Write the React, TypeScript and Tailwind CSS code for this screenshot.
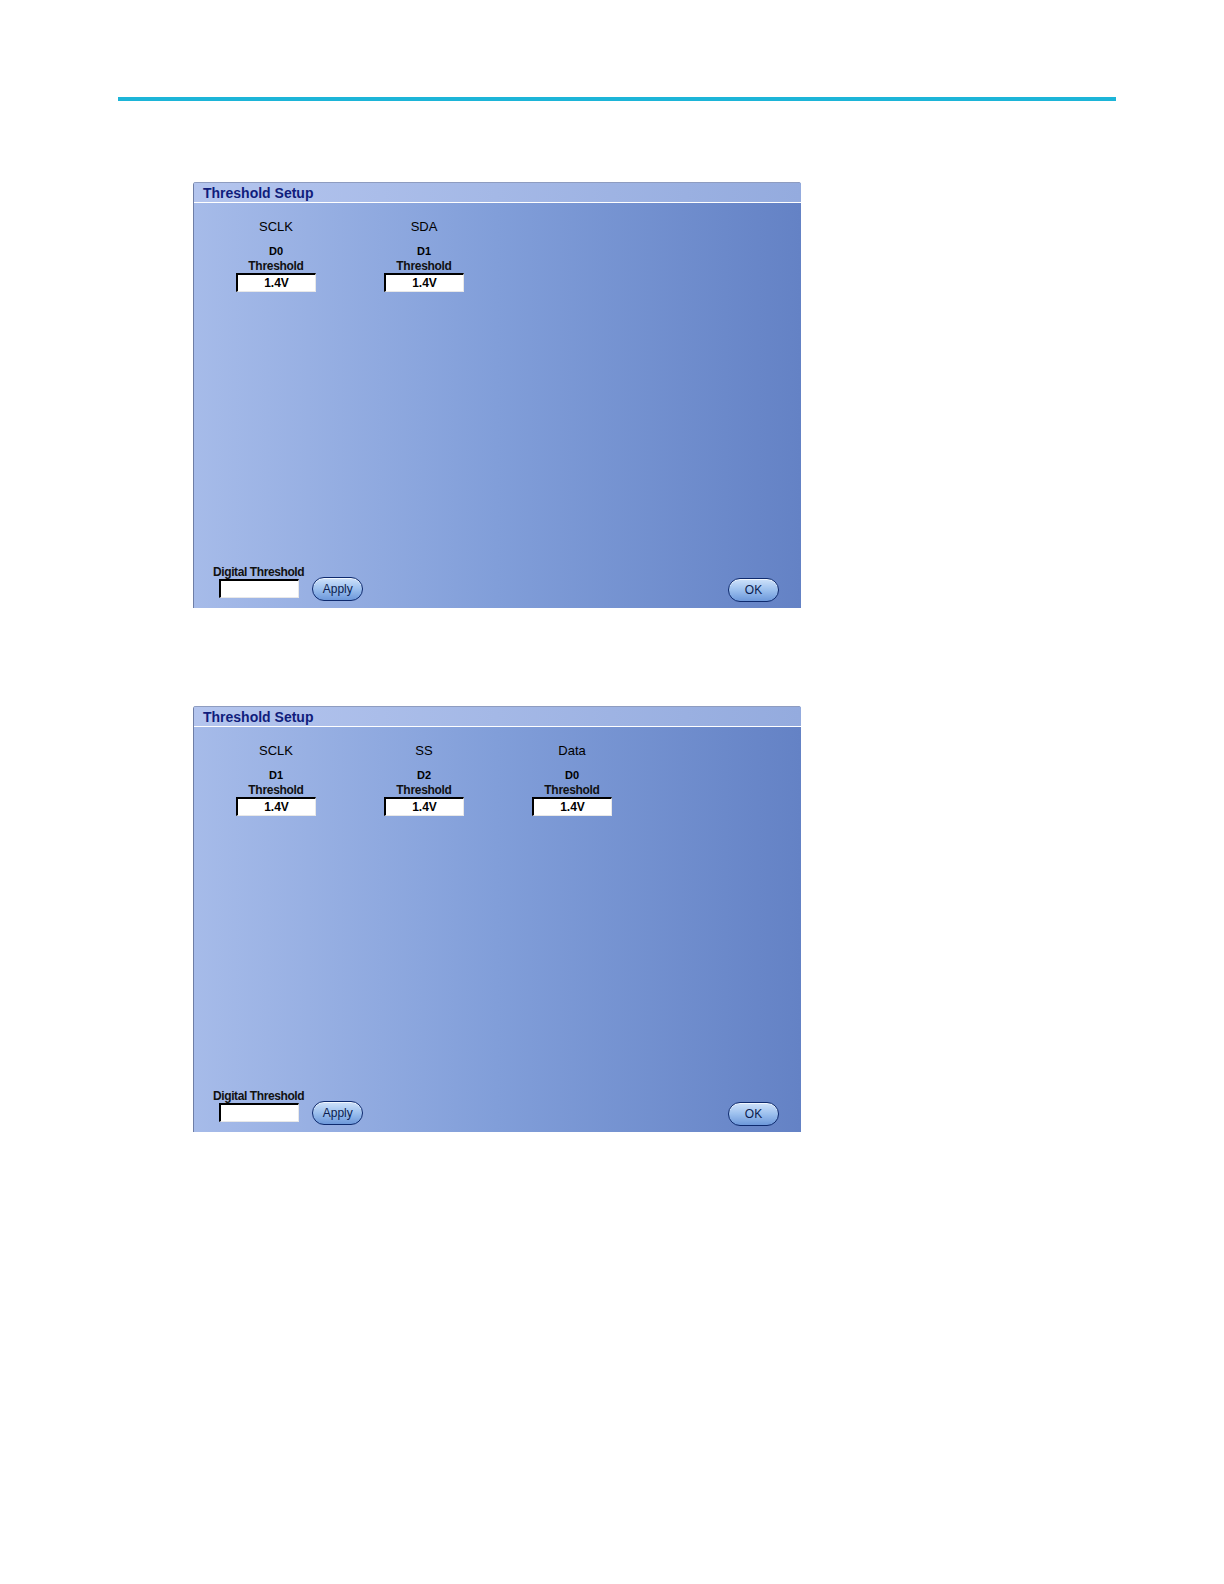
const font = { fontFamily: '"Liberation Sans", Arial, sans-serif' }

type Channel = { name: string; source: string }

function ThresholdColumn({ ch }: { ch: Channel }) {
  return (
    <div className="w-[148px] flex flex-col items-center">
      <div className="text-[13px] leading-[16px] text-black mt-[16px]">{ch.name}</div>
      <div className="text-[11px] leading-[13px] font-bold text-black mt-[10px]">{ch.source}</div>
      <div className="text-[12px] leading-[14px] font-bold text-[#111] mt-[1px] tracking-[-0.3px]">Threshold</div>
      <div className="w-[80px] h-[19px] bg-white border-t-[2px] border-l-[2px] border-b border-r border-t-black border-l-black border-b-[#e8e8e8] border-r-[#e8e8e8] flex items-center justify-center text-[12px] font-bold text-black leading-none">
        1.4V
      </div>
    </div>
  )
}

function PillButton({ label }: { label: string }) {
  return (
    <div className="w-[51px] h-[24px] rounded-full border border-[#0e2a6e] bg-gradient-to-b from-[#cfe2fa] via-[#9cc0ee] to-[#6d98da] flex items-center justify-center text-[12px] text-[#0b1c4e] leading-none shadow-[inset_0_1px_0_rgba(255,255,255,0.7)]">
      {label}
    </div>
  )
}

function ThresholdPanel({ channels }: { channels: Channel[] }) {
  return (
    <div className="ml-[193px] w-[608px] h-[426px] flex flex-col border-l border-[#6f7ea6] rounded-tl-[3px] rounded-tr-[3px] overflow-hidden bg-gradient-to-r from-[#a6bbe9] via-[#819ed9] to-[#6482c5]" style={font}>
      <div className="h-[21px] border-t border-[#8e9cc0] border-b border-b-white bg-gradient-to-r from-[#b4c5ee] to-[#94abde] flex items-center pl-[9px]">
        <span className="text-[14px] font-bold text-[#101d7c] leading-none">Threshold Setup</span>
      </div>
      <div className="flex pl-[8px]">
        {channels.map((c) => (
          <ThresholdColumn key={c.name} ch={c} />
        ))}
      </div>
      <div className="flex-1" />
      <div className="flex items-end justify-between pl-[19px] pr-[22px] pb-[10px]">
        <div className="flex items-end gap-[8px]">
          <div className="flex flex-col">
            <div className="text-[12px] leading-[14px] font-bold text-[#111] tracking-[-0.4px]">Digital Threshold</div>
            <div className="ml-[6px] w-[80px] h-[19px] bg-white border-t-[2px] border-l-[2px] border-b border-r border-t-black border-l-black border-b-[#e8e8e8] border-r-[#e8e8e8]" />
          </div>
          <div className="mb-[-3px]">
            <PillButton label="Apply" />
          </div>
        </div>
        <div className="mb-[-4px]">
          <PillButton label="OK" />
        </div>
      </div>
    </div>
  )
}

export default function App() {
  return (
    <div className="w-[1224px] h-[1584px] bg-white pt-[97px]">
      <div className="ml-[118px] w-[998px] h-[4px] bg-[#1cb5d8]" />
      <div className="mt-[81px]">
        <ThresholdPanel
          channels={[
            { name: 'SCLK', source: 'D0' },
            { name: 'SDA', source: 'D1' },
          ]}
        />
      </div>
      <div className="mt-[98px]">
        <ThresholdPanel
          channels={[
            { name: 'SCLK', source: 'D1' },
            { name: 'SS', source: 'D2' },
            { name: 'Data', source: 'D0' },
          ]}
        />
      </div>
    </div>
  )
}
